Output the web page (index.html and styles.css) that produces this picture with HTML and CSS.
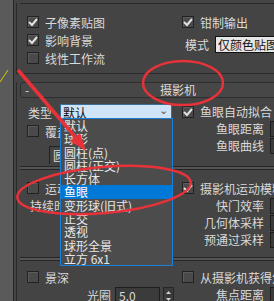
FILE: index.html
```html
<!doctype html>
<html>
    <head>
        <meta charset="utf-8" />
        <title>摄影机</title>
        <link rel="stylesheet" href="styles.css">
    </head>
    <body>
        <div class="screen">
            <div class="viewport">
                <svg class="grid-line" width="13" height="301"><line x1="0" y1="82" x2="8" y2="70" stroke="#d8c800" stroke-width="1" /></svg>
            </div>
            <div class="panel">
                <div class="rollout rollout-top">
                    <div class="group">
                        <div class="col">
                            <div class="row check"><span class="box on"><svg width="10" height="10"><polyline points="1,5 4,8 9,2" /></svg></span>子像素贴图</div>
                            <div class="row check"><span class="box on"><svg width="10" height="10"><polyline points="1,5 4,8 9,2" /></svg></span>影响背景</div>
                            <div class="row check"><span class="box"></span>线性工作流</div>
                        </div>
                        <div class="col">
                            <div class="row check"><span class="box on"><svg width="10" height="10"><polyline points="1,5 4,8 9,2" /></svg></span>钳制输出</div>
                            <div class="row mode"><span class="mode-label">模式</span><span class="combo gray">仅颜色贴图</span></div>
                        </div>
                    </div>
                </div>

                <div class="rollout rollout-cam">
                    <div class="header"><span class="minus">-</span><span class="title">摄影机</span></div>

                    <div class="section sec1">
                        <div class="col">
                            <div class="row type"><span class="type-label">类型</span><span class="combo blue">默认<span class="arrow">&#8964;</span></span></div>
                            <div class="row check"><span class="box"></span>覆盖视野</div>
                            <div class="row sub"><span class="boxed">圆形</span></div>
                        </div>
                        <div class="col">
                            <div class="row check first"><span class="box on"><svg width="10" height="10"><polyline points="1,5 4,8 9,2" /></svg></span>鱼眼自动拟合</div>
                            <div class="row value"><span class="name">鱼眼距离</span><span class="spin"></span></div>
                            <div class="row value"><span class="name">鱼眼曲线</span><span class="spin"></span></div>
                        </div>
                    </div>
                    <div class="sep"></div>

                    <div class="section sec2">
                        <div class="col">
                            <div class="row check"><span class="box"></span>运动模糊</div>
                            <div class="row plain">持续时间(帧)</div>
                        </div>
                        <div class="col">
                            <div class="row check"><span class="box on"><svg width="10" height="10"><polyline points="1,5 4,8 9,2" /></svg></span>摄影机运动模糊</div>
                            <div class="row value"><span class="name">快门效率</span><span class="spin"></span></div>
                            <div class="row value"><span class="name">几何体采样</span><span class="spin"></span></div>
                            <div class="row value"><span class="name">预通过采样</span><span class="spin"></span></div>
                        </div>
                    </div>
                    <div class="sep"></div>

                    <div class="section sec3">
                        <div class="col">
                            <div class="row check"><span class="box"></span>景深</div>
                            <div class="row aperture"><span class="ap-label">光圈</span><span class="num">5.0</span><span class="arrows"><svg width="9" height="16"><polygon points="2,6 7,6 4.5,3" /><polygon points="2,10 7,10 4.5,13" /></svg></span></div>
                        </div>
                        <div class="col">
                            <div class="row check"><span class="box"></span>从摄影机获得焦点距离</div>
                            <div class="row value"><span class="name">焦点距离</span><span class="spin"></span></div>
                        </div>
                    </div>
                </div>
            </div>

            <!-- open combo list -->
            <div class="list">
                <div class="item">默认</div>
                <div class="item">球形</div>
                <div class="item">圆柱(点)</div>
                <div class="item">圆柱(正交)</div>
                <div class="item">长方体</div>
                <div class="item selected">鱼眼</div>
                <div class="item">变形球(旧式)</div>
                <div class="item">正交</div>
                <div class="item">透视</div>
                <div class="item">球形全景</div>
                <div class="item">立方 6x1</div>
            </div>

            <!-- red markup drawn over the screenshot -->
            <svg class="marks" width="274" height="301">
                <line x1="18" y1="70" x2="77" y2="139" stroke="#e8323a" stroke-width="3.5" />
                <polygon points="86,151 70,141 80,133" fill="#e8323a" />
                <ellipse cx="183" cy="83" rx="40" ry="22" fill="none" stroke="#e8323a" stroke-width="2.5" />
                <ellipse cx="104" cy="190" rx="87" ry="23" fill="none" stroke="#e8323a" stroke-width="2.5" transform="rotate(-5 104 190)" />
            </svg>
        </div>
    </body>
</html>
```

FILE: styles.css
```css
body {
    margin: 0;
    background: #444;
    font-family: "Noto Sans CJK SC", "Liberation Sans", sans-serif;
    font-size: 12px;
    color: #dadada;
}
.screen {
    position: relative;
    width: 274px;
    height: 301px;
    overflow: hidden;
    display: flex;
}
.viewport {
    width: 13px;
    flex: none;
    background: #5a5a5a;
    border-right: 1px solid #262626;
}
.grid-line {
    display: block;
}
.panel {
    flex: none;
    width: 320px;
    padding-left: 2px;
}
.rollout {
    border-left: 1px solid #2a2a2a;
}
.rollout-top {
    height: 70px;
    border-bottom: 1px solid #2a2a2a;
}
.group {
    margin: 3px 0 0 3px;
    border-top: 1px solid #2a2a2a;
    padding: 9px 0 0 7px;
    display: grid;
    grid-template-columns: 155px 1fr;
}
.row {
    display: flex;
    align-items: center;
    height: 18px;
    white-space: nowrap;
}
.box {
    width: 10px;
    height: 10px;
    margin-right: 6px;
    background: #4a4a4a;
    border: 1px solid #222;
    box-shadow: inset 1px 1px 0 #5c5c5c;
    display: flex;
    align-items: center;
    justify-content: center;
}
.box svg polyline {
    fill: none;
    stroke: #e4e4e4;
    stroke-width: 2;
}
.mode {
    margin-top: 4px;
}
.mode-label {
    width: 30px;
    padding-left: 3px;
}
.combo {
    height: 15px;
    line-height: 15px;
    padding-left: 2px;
    color: #111;
    position: relative;
}
.combo.gray {
    width: 70px;
    background: #e6e6e6;
    border: 1px solid #111;
}
.combo.blue {
    width: 108px;
    background: #cfe5f7;
    border: 1px solid #3c6e97;
}
.arrow {
    position: absolute;
    right: 3px;
    top: -3px;
    color: #555;
    font-size: 11px;
}
.rollout-cam {
    margin-top: 8px;
}
.header {
    margin-left: 3px;
    height: 14px;
    border: 1px solid #2e2e2e;
    border-radius: 3px;
    background: #474747;
    display: flex;
    align-items: center;
    line-height: 14px;
}
.minus {
    padding-left: 4px;
    width: 135px;
}
.section {
    display: grid;
    grid-template-columns: 155px 1fr;
    padding-left: 10px;
}
.sec1 {
    height: 68px;
}
.sec2 {
    height: 87px;
}
.sec3 {
    height: 50px;
}
.sec1 .col {
    padding-top: 5px;
}
.sec2 .col {
    padding-top: 9px;
}
.sec3 .col {
    padding-top: 7px;
}
.type {
    height: 19px;
}
.type-label {
    width: 32px;
    padding-left: 1px;
}
.sub {
    margin-top: 7px;
    height: 16px;
}
.boxed {
    margin-left: 22px;
    padding-left: 3px;
    border-left: 1px solid #222;
    border-top: 1px solid #222;
}
.sec1 .value,
.sec2 .value,
.sec3 .value {
    height: 17px;
}
.sec1 .first {
    height: 17px;
}
.name {
    width: 82px;
    text-align: right;
}
.spin {
    margin-left: 6px;
    width: 40px;
    height: 14px;
    background: #3a3a3a;
    border: 1px solid #1c1c1c;
}
.plain {
    padding-left: 3px;
    height: 16px;
}
.aperture {
    height: 19px;
}
.ap-label {
    width: 28px;
    padding-left: 60px;
}
.num {
    width: 40px;
    height: 16px;
    line-height: 16px;
    padding-left: 3px;
    background: #3b3b3b;
    border: 1px solid #1e1e1e;
}
.arrows {
    margin-left: 3px;
    width: 9px;
    height: 16px;
    background: #3b3b3b;
    border: 1px solid #262626;
}
.arrows svg {
    display: block;
    fill: #cfcfcf;
}
.sep {
    margin-left: 3px;
    height: 2px;
    border-top: 1px solid #262626;
    border-bottom: 1px solid #262626;
    background: #555;
}
.list {
    position: absolute;
    left: 60px;
    top: 118px;
    width: 111px;
    background: #4c4c4c;
    border: 1px solid #1a7fd6;
}
.item {
    height: 13.3px;
    line-height: 13px;
    padding-left: 3px;
    color: #e8e8e8;
    white-space: nowrap;
}
.item.selected {
    background: #0078d7;
    color: #fff;
}
.marks {
    position: absolute;
    left: 0;
    top: 0;
}
```
